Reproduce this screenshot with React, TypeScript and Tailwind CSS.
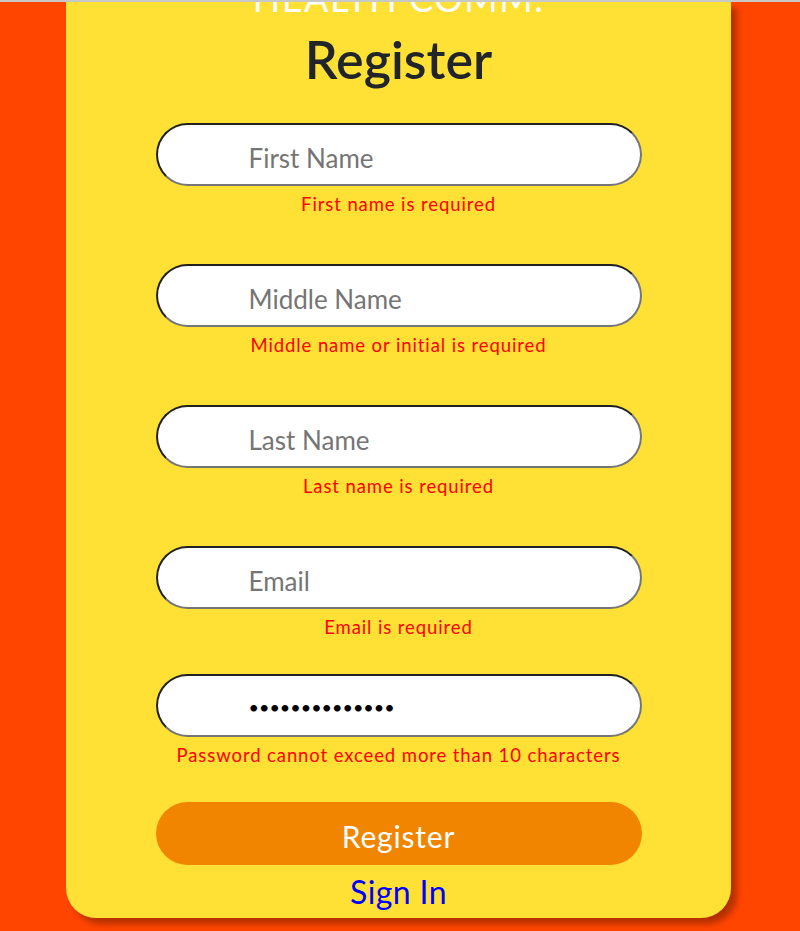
import React from "react";

const fields = [
  { ph: "First Name", err: "First name is required", mb: "mb-[47px]" },
  { ph: "Middle Name", err: "Middle name or initial is required", mb: "mb-[47px]" },
  { ph: "Last Name", err: "Last name is required", mb: "mb-[47px]" },
  { ph: "Email", err: "Email is required", mb: "mb-[34px]" },
];

export default function App() {
  return (
    <div
      className="h-[931px] overflow-hidden bg-[#ff4500] border-t-2 border-[#c8c8c8]"
      style={{ fontFamily: "Lato, 'Open Sans', sans-serif" }}
    >
      <div className="ml-[66px] w-[665px] bg-[#ffe135] rounded-b-[30px] shadow-[6px_6px_6px_rgba(0,0,0,0.3)] flex flex-col">
        <div className="-mt-[24px] h-[40px] text-center text-white text-[36px] leading-[40px] tracking-[1.5px]">
          HEALTH COMM.
        </div>
        <h1 className="mt-[6px] h-[70px] text-center text-[52px] leading-[70px] font-semibold text-[#212529]">
          Register
        </h1>
        <div className="mt-[29px] w-[486px] mx-auto flex flex-col">
          {fields.map((f) => (
            <div key={f.ph} className={f.mb}>
              <input
                readOnly
                placeholder={f.ph}
                className="w-full h-[63px] rounded-full bg-white border-2 [border-style:inset] border-[#767676] pl-[91px] pt-[6px] text-[26px] text-black placeholder:text-[#757575] outline-none"
              />
              <p className="mt-[5px] h-[26px] text-center text-[18.5px] tracking-[0.9px] leading-[26px] text-[#ff0000] whitespace-nowrap">
                {f.err}
              </p>
            </div>
          ))}
          <div className="mb-[34px]">
            <input
              readOnly
              type="password"
              value="aaaaaaaaaaaaaa"
              className="w-full h-[63px] rounded-full bg-white border-2 [border-style:inset] border-[#767676] pl-[91px] pt-[2px] text-[18px] text-black outline-none"
            />
            <p className="mt-[5px] h-[26px] text-center text-[18.5px] tracking-[0.9px] leading-[26px] text-[#ff0000] whitespace-nowrap">
              Password cannot exceed more than 10 characters
            </p>
          </div>
          <button className="h-[63px] w-full rounded-full bg-[#f28500] text-white text-[30px] tracking-[0.8px] leading-[63px] pt-[3px]">
            Register
          </button>
          <a href="#" className="block h-[53px] text-center text-[32px] tracking-[0.4px] leading-[53px] text-[#0000ff]">
            Sign In
          </a>
        </div>
      </div>
    </div>
  );
}
